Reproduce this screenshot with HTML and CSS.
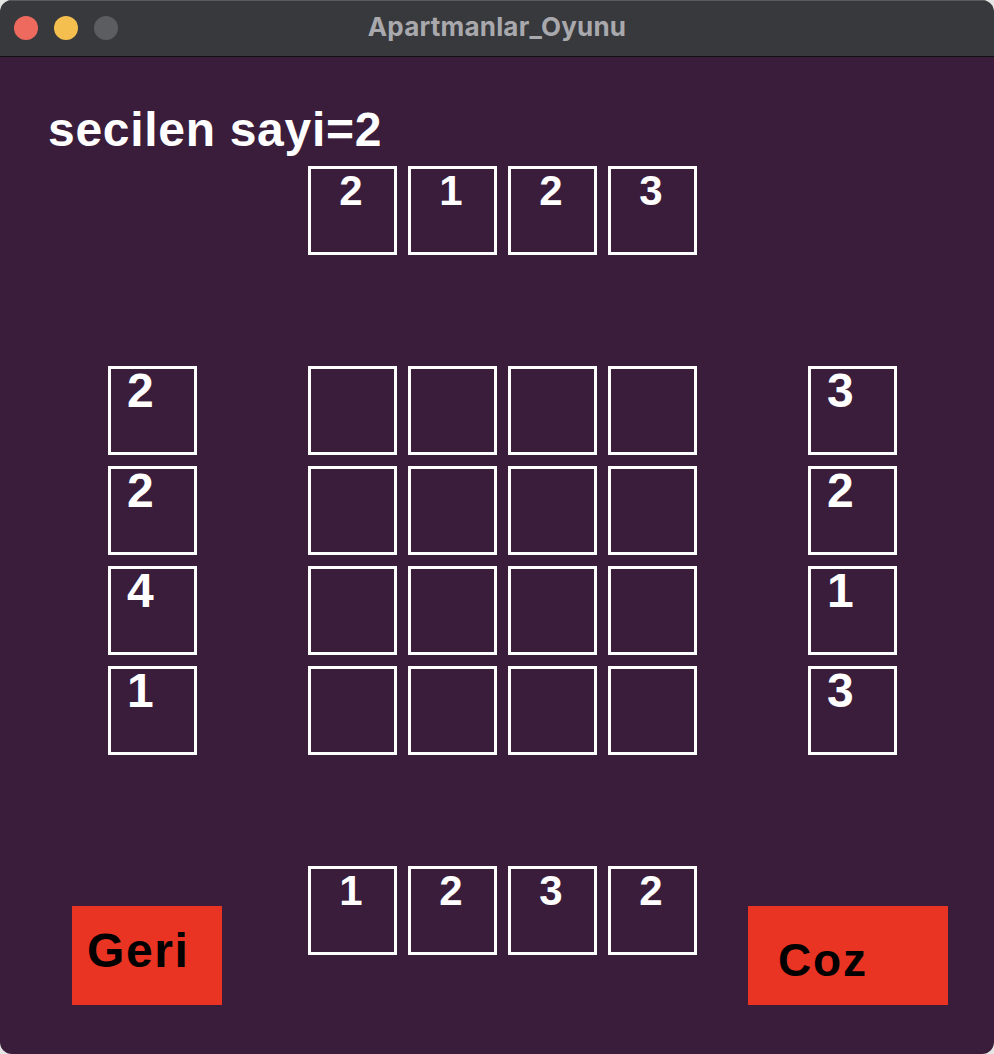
FILE: index.html
```html
<!DOCTYPE html>
<html lang="tr">
<head>
<meta charset="utf-8">
<title>Apartmanlar_Oyunu</title>
<link rel="stylesheet" href="styles.css">
</head>
<body>
<div class="window">
  <div class="titlebar">
    <div class="lights">
      <span class="light red"></span>
      <span class="light yellow"></span>
      <span class="light gray"></span>
    </div>
    <div class="title">Apartmanlar_Oyunu</div>
  </div>
  <div class="content">
    <div class="label">secilen sayi=2</div>
    <div class="board">
      <div class="cell clue top c3">2</div>
      <div class="cell clue top c4">1</div>
      <div class="cell clue top c5">2</div>
      <div class="cell clue top c6">3</div>

      <div class="cell side r3 c1">2</div>
      <div class="cell r3 c3"></div><div class="cell r3 c4"></div><div class="cell r3 c5"></div><div class="cell r3 c6"></div>
      <div class="cell side r3 c8">3</div>

      <div class="cell side r4 c1">2</div>
      <div class="cell r4 c3"></div><div class="cell r4 c4"></div><div class="cell r4 c5"></div><div class="cell r4 c6"></div>
      <div class="cell side r4 c8">2</div>

      <div class="cell side r5 c1">4</div>
      <div class="cell r5 c3"></div><div class="cell r5 c4"></div><div class="cell r5 c5"></div><div class="cell r5 c6"></div>
      <div class="cell side r5 c8">1</div>

      <div class="cell side r6 c1">1</div>
      <div class="cell r6 c3"></div><div class="cell r6 c4"></div><div class="cell r6 c5"></div><div class="cell r6 c6"></div>
      <div class="cell side r6 c8">3</div>
    </div>
    <div class="footer">
      <div class="btn geri">Geri</div>
      <div class="bottom-clues">
        <div class="cell clue">1</div>
        <div class="cell clue">2</div>
        <div class="cell clue">3</div>
        <div class="cell clue">2</div>
      </div>
      <div class="btn coz">Coz</div>
    </div>
  </div>
</div>
</body>
</html>
```

FILE: styles.css
```css
html, body {
  margin: 0;
  padding: 0;
  background: #e6e6e6;
}

.window {
  width: 994px;
  height: 1054px;
  border-radius: 12px;
  overflow: hidden;
  display: flex;
  flex-direction: column;
}

.titlebar {
  position: relative;
  height: 56px;
  flex: none;
  background: #38393d;
  border-bottom: 1px solid #111113;
  box-shadow: inset 0 1px 0 #5a5b5f;
  display: flex;
  align-items: center;
}

.lights {
  display: flex;
  gap: 16px;
  padding-left: 14px;
}

.light {
  width: 24px;
  height: 24px;
  border-radius: 50%;
  display: block;
}
.light.red { background: #ee6a5f; }
.light.yellow { background: #f5bf4f; }
.light.gray { background: #5c5d61; }

.title {
  position: absolute;
  left: 0;
  right: 0;
  top: 0;
  height: 56px;
  line-height: 54px;
  text-align: center;
  font-family: "Inter", "Liberation Sans", sans-serif;
  font-weight: 700;
  font-size: 26px;
  letter-spacing: 0.2px;
  color: #a9a9ad;
}

.content {
  flex: 1;
  background: #3a1c3b;
  padding-top: 45px;
  font-family: "Liberation Sans", Arial, sans-serif;
  font-weight: 700;
  color: #ffffff;
}

.label {
  font-size: 48px;
  line-height: 56px;
  height: 56px;
  padding-left: 48px;
  letter-spacing: 0.7px;
}

.board {
  margin-top: 8px;
  margin-left: 108px;
  display: grid;
  grid-template-columns: repeat(8, 89px);
  grid-template-rows: repeat(6, 89px);
  gap: 11px;
}

.cell {
  box-sizing: border-box;
  width: 89px;
  height: 89px;
  border: 3px solid #ffffff;
}

.clue {
  font-size: 42px;
  line-height: 43px;
  text-align: center;
  padding-right: 3px;
}

.side {
  font-size: 48px;
  line-height: 43px;
  padding-left: 16px;
}

.top { grid-row: 1; }
.r3 { grid-row: 3; }
.r4 { grid-row: 4; }
.r5 { grid-row: 5; }
.r6 { grid-row: 6; }
.c1 { grid-column: 1; }
.c3 { grid-column: 3; }
.c4 { grid-column: 4; }
.c5 { grid-column: 5; }
.c6 { grid-column: 6; }
.c8 { grid-column: 8; }

.footer {
  margin-top: 111px;
  display: flex;
  align-items: flex-start;
}

.bottom-clues {
  display: flex;
  gap: 11px;
  margin-left: 86px;
}

.btn {
  box-sizing: border-box;
  height: 99px;
  margin-top: 40px;
  background: #e93323;
  color: #000000;
}

.geri {
  width: 150px;
  margin-left: 72px;
  font-size: 48px;
  line-height: 89px;
  padding-left: 15px;
  letter-spacing: 1.6px;
}

.coz {
  width: 200px;
  margin-left: 51px;
  font-size: 46px;
  line-height: 68px;
  padding-top: 20px;
  padding-left: 30px;
  letter-spacing: 1.8px;
}
```
